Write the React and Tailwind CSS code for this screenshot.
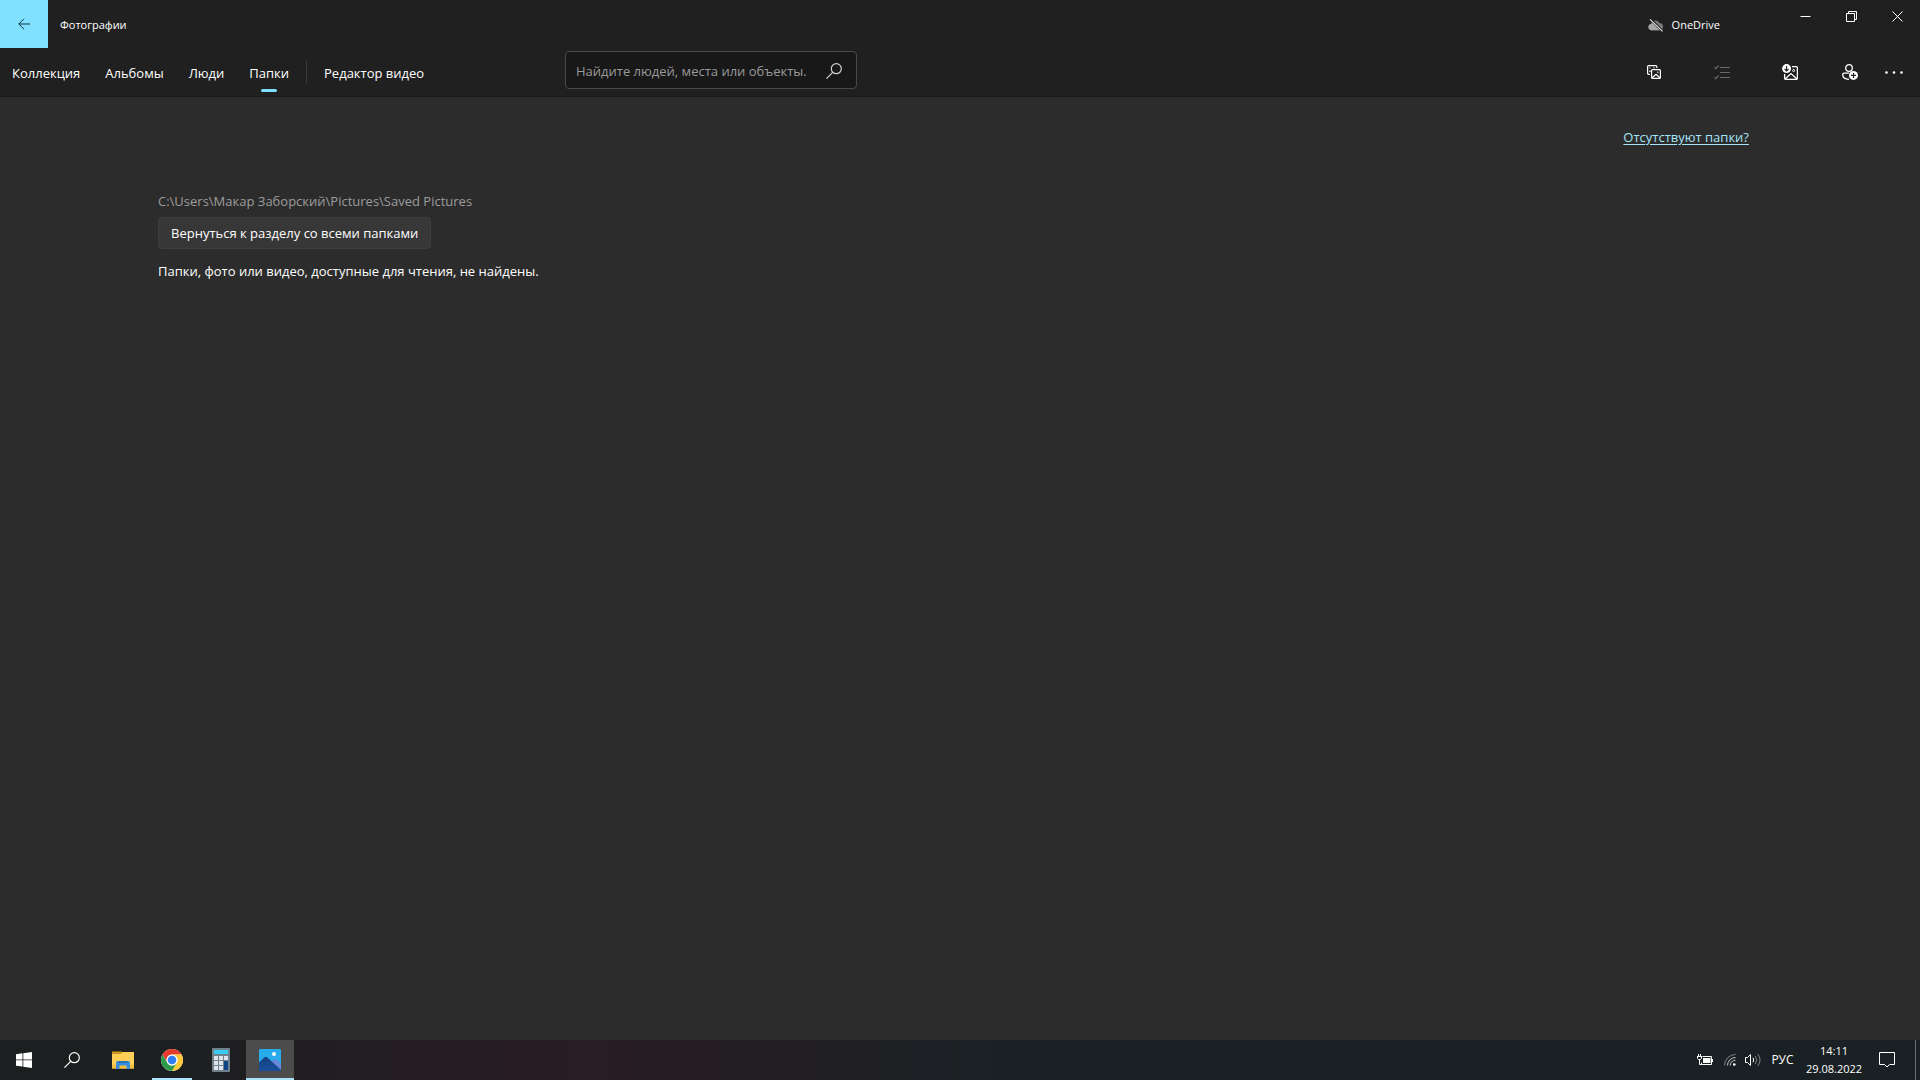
import { useState } from 'react';
import { clsx } from 'clsx';

const TABS = ['Коллекция', 'Альбомы', 'Люди', 'Папки'];

function BackIcon() {
  return (
    <svg className="w-3 h-3" viewBox="0 0 12 12" fill="none" stroke="currentColor">
      <path d="M12 6H0.8M6 0.8 0.8 6 6 11.2" />
    </svg>
  );
}

function CloudOffIcon() {
  return (
    <svg className="w-4 h-4" viewBox="0 0 16 16">
      <path d="M3.4 13.2a3.2 3.2 0 0 1-.5-6.3A4.6 4.6 0 0 1 11.4 6a3.7 3.7 0 0 1 1.1 7.2z" fill="#7a7a7a" />
      <path d="M3.400 13.200a3.200 3.200 0 0 1-.5-6.300q2-.8 3.800.6l6 5.700z" fill="#a8a8a8" />
      <path d="M2.600 2.200 14.600 14.400" stroke="#202020" strokeWidth="2.600" />
      <path d="M2 2.400 14.600 14.400" stroke="#e6e6e6" strokeWidth="1.100" />
    </svg>
  );
}

function SearchIcon({ className }) {
  return (
    <svg className={className} viewBox="0 0 16 16" fill="none" stroke="currentColor" strokeWidth="1.2">
      <circle cx="10.300" cy="5.700" r="5" />
      <path d="M6.700 9.300 0.400 15.600" />
    </svg>
  );
}

function DuplicatesIcon() {
  return (
    <svg className="w-4 h-4" viewBox="0 0 16 16" fill="none" stroke="currentColor" strokeWidth="1.200">
      <path d="M4 10.400H2.600a1 1 0 0 1-1-1V2.600a1 1 0 0 1 1-1h7.200a1 1 0 0 1 1 1V4" />
      <path d="M3.400 4h1M3.400 7.800 4.600 6.600M7.500 3.800h1" />
      <rect x="5.600" y="5.600" width="8.800" height="8.800" rx="1" />
      <path d="m6.200 13.800 3.800-3.500 3.800 3.500" />
      <circle cx="11.800" cy="8.200" r="0.700" fill="currentColor" stroke="none" />
    </svg>
  );
}

function SelectIcon() {
  return (
    <svg className="w-4 h-4" viewBox="0 0 16 16" fill="none" stroke="currentColor">
      <path d="M6 3.500h10M6 8.500h10M6 13.500h10" />
      <path d="m0.500 3.300 1.300 1.300L4.700 1.500M0.500 13.300l1.300 1.300L4.700 11.500" strokeWidth="1.300" />
    </svg>
  );
}

function ImportIcon() {
  return (
    <svg className="w-4 h-4" viewBox="0 0 16 16" fill="none" stroke="currentColor" strokeWidth="1.300">
      <path d="M10 2.600h4.200a1.200 1.200 0 0 1 1.200 1.200v10.400a1.200 1.200 0 0 1-1.200 1.200H3.800a1.200 1.200 0 0 1-1.200-1.200V10" />
      <path d="m3 15 6-5.400 6 5.400" />
      <circle cx="11.600" cy="6.500" r="1" strokeWidth="1" />
      <circle cx="4.600" cy="4.600" r="4.500" fill="currentColor" stroke="none" />
      <path d="M4.600 2v5M2.600 5l2 2 2-2" stroke="#202020" strokeWidth="1.100" />
    </svg>
  );
}

function AddPersonIcon() {
  return (
    <svg className="w-4 h-4" viewBox="0 0 16 16" fill="none" stroke="currentColor" strokeWidth="1.300">
      <circle cx="7" cy="4" r="3.300" />
      <path d="M7 9.200H2a1.300 1.300 0 0 0-1.300 1.300c0 2.800 2.400 4.600 6.300 4.800" />
      <circle cx="11.500" cy="11.400" r="4.500" fill="currentColor" stroke="none" />
      <path d="M11.500 8.900v5M9 11.400h5" stroke="#202020" strokeWidth="1.200" />
    </svg>
  );
}

function MoreIcon() {
  return (
    <svg className="w-[18px] h-4" viewBox="0 0 18 16" fill="currentColor">
      <circle cx="1.500" cy="8.500" r="1.300" />
      <circle cx="9" cy="8.500" r="1.300" />
      <circle cx="16.500" cy="8.500" r="1.300" />
    </svg>
  );
}

function ToolButton({ label, disabled, className, children }) {
  return (
    <button
      aria-label={label}
      disabled={disabled}
      className={clsx('h-12 flex items-center justify-center disabled:text-[#6a6a6a]', className)}
    >
      {children}
    </button>
  );
}

function WindowButton({ label, children }) {
  return (
    <button aria-label={label} className="w-[46px] h-8 flex items-center justify-center hover:bg-white/10">
      <svg className="w-[11px] h-[11px]" viewBox="0 0 11 11" fill="none" stroke="currentColor">
        {children}
      </svg>
    </button>
  );
}

function TitleBar() {
  return (
    <header className="flex h-12 text-[11px] leading-4">
      <button aria-label="Назад" className="w-12 h-12 flex items-center justify-center bg-[#80e0ff] text-[#17343c]">
        <BackIcon />
      </button>
      <h1 className="self-center ml-3 pt-0.5">Фотографии</h1>
      <button className="self-center ml-auto mr-[62px] pt-0.5 flex items-center gap-2 text-xs leading-4">
        <CloudOffIcon />
        <span className="text-[11px]">OneDrive</span>
      </button>
      <div className="flex">
        <WindowButton label="Свернуть">
          <path d="M0.500 5.500h10" />
        </WindowButton>
        <WindowButton label="Свернуть в окно">
          <path d="M0.500 2.500h8v8h-8zM2.500 2.500v-2h8v8h-2" />
        </WindowButton>
        <WindowButton label="Закрыть">
          <path d="m0.500 0.500 10 10M10.500 0.500l-10 10" />
        </WindowButton>
      </div>
    </header>
  );
}

function NavBar() {
  const [active, setActive] = useState('Папки');

  return (
    <div className="flex h-[49px] border-b border-[#1a1a1a]">
      <nav className="flex gap-px w-[565px] shrink-0 text-[13px] leading-5">
        {TABS.map((tab) => (
          <button
            key={tab}
            onClick={() => setActive(tab)}
            className="relative h-12 px-3 pt-0.5"
          >
            {tab}
            {active === tab && (
              <span className="absolute bottom-1 left-1/2 -translate-x-1/2 w-4 h-[3px] rounded-full bg-[#80e0ff]" />
            )}
          </button>
        ))}
        <span className="w-px h-6 ml-1 mt-3 bg-[#3a3a3a]" />
        <button className="h-12 ml-1 px-3 pt-0.5">Редактор видео</button>
      </nav>

      {/* Search */}
      <form
        onSubmit={(e) => e.preventDefault()}
        className="flex items-center w-[292px] h-[38px] mt-[3px] rounded border border-[#4a4a4a] bg-[#181818]"
      >
        <input
          type="text"
          aria-label="Поиск"
          placeholder="Найдите людей, места или объекты."
          className="flex-1 min-w-0 h-full pl-2.5 pt-0.5 text-[13px] bg-transparent outline-none placeholder:text-[#9a9a9a]"
        />
        <button aria-label="Найти" className="w-11 h-full pt-0.5 flex items-center justify-center text-[#d0d0d0]">
          <SearchIcon className="w-4 h-4" />
        </button>
      </form>

      {/* Commands */}
      <div className="flex ml-auto pr-2">
        <ToolButton label="Показать дубликаты" className="w-[68px]">
          <DuplicatesIcon />
        </ToolButton>
        <ToolButton label="Выбрать" disabled className="w-[68px]">
          <SelectIcon />
        </ToolButton>
        <ToolButton label="Импорт" className="w-[68px]">
          <ImportIcon />
        </ToolButton>
        <ToolButton label="Добавить друзей" className="w-[52px]">
          <AddPersonIcon />
        </ToolButton>
        <ToolButton label="Ещё" className="w-9">
          <MoreIcon />
        </ToolButton>
      </div>
    </div>
  );
}

function StartIcon() {
  return (
    <svg className="w-4 h-4" viewBox="0 0 16 16" fill="#fff">
      <path d="M0 2.200 6.500 1.300v6.200H0zM7.300 1.200 16 0v7.500H7.300zM0 8.300h6.500v6.300L0 13.700zM7.300 8.300H16V16l-8.700-1.200z" />
    </svg>
  );
}

function ExplorerIcon() {
  return (
    <svg className="w-[22px] h-5" viewBox="0 0 22 20">
      <path d="M0 1.500h9.500l1 2H0z" fill="#dd9b12" />
      <path d="M0 3.500h9L10.500 2H22v16.500H0z" fill="#ffcf58" />
      <path d="M0 15h22v3.500H0z" fill="#f5bd3b" />
      <path d="M4 19v-6.500A1.500 1.500 0 0 1 5.500 11h11a1.500 1.500 0 0 1 1.500 1.500V19h-3.500v-3.500h-7V19z" fill="#3a8fdd" />
      <path d="M6.500 11h9v2h-9z" fill="#2173bd" />
    </svg>
  );
}

function ChromeIcon() {
  return (
    <svg className="w-6 h-6" viewBox="0 0 48 48">
      <circle cx="24" cy="24" r="22" fill="#fff" />
      <path d="M24 2a22 22 0 0 1 19.050 11H24a11 11 0 0 0-9.530 16.500L4.950 13A22 22 0 0 1 24 2z" fill="#e33b2e" />
      <path d="M43.050 13A22 22 0 0 1 24 46l9.530-16.500A11 11 0 0 0 24 13z" fill="#fcc934" />
      <path d="M4.950 13 14.470 29.500a11 11 0 0 0 19.060 0L24 46A22 22 0 0 1 4.950 13z" fill="#2c9a48" />
      <circle cx="24" cy="24" r="11" fill="#fff" />
      <circle cx="24" cy="24" r="8.700" fill="#2f7df0" />
    </svg>
  );
}

function CalculatorIcon() {
  return (
    <svg className="w-[18px] h-6" viewBox="0 0 18 24">
      <rect width="18" height="24" rx="1" fill="#71808d" />
      <rect x="2" y="2" width="14" height="4" fill="#39ccf2" />
      <path d="M2 8h4v4H2zM7 8h4v4H7zM12 8h4v4h-4zM2 13h4v4H2zM7 13h4v4H7zM2 18h4v4H2zM7 18h4v4H7z" fill="#dfe4ea" />
      <path d="M12 13h4v9h-4z" fill="#0c4684" />
    </svg>
  );
}

function PhotosIcon() {
  return (
    <svg className="w-[22px] h-[22px]" viewBox="0 0 22 22">
      <defs>
        <linearGradient id="photos-hill" x1="0" y1="0" x2="0" y2="1">
          <stop offset="0" stopColor="#15417f" />
          <stop offset="1" stopColor="#184f9d" />
        </linearGradient>
      </defs>
      <rect width="22" height="22" rx="1" fill="#27abea" />
      <path d="m11 14 4-3.500q1.200-.8 2.400 0L22 15v7H11z" fill="#6886dc" />
      <path d="M0 13.500 5.500 8.200q1.300-1 2.600 0L22 21v1H0z" fill="url(#photos-hill)" />
      <circle cx="15" cy="5" r="2" fill="#fff" />
    </svg>
  );
}

function BatteryIcon() {
  return (
    <svg className="w-4 h-3" viewBox="0 0 16 12" fill="none" stroke="currentColor">
      <path d="M5.500 2.500h9v8h-10v-2M15.500 5v3" />
      <path d="M6 4h7.500v5H6z" fill="currentColor" stroke="none" />
      <path d="M1.500 0v2M3.500 0v2M0 2.500h5M0.500 2.500v2l1 1h2l1-1v-2M2.500 5.500v5h2" />
    </svg>
  );
}

function WifiIcon() {
  return (
    <svg className="w-3 h-3" viewBox="0 0 12 12" fill="none" stroke="#c8c8c8">
      <path d="M0.500 11.500a11 11 0 0 1 11-11" stroke="#858585" />
      <path d="M3.500 11.500a8 8 0 0 1 8-8M6.200 11.500a5.300 5.300 0 0 1 5.300-5.300" />
      <circle cx="10.300" cy="10.500" r="1.300" fill="#fff" stroke="none" />
    </svg>
  );
}

function VolumeIcon() {
  return (
    <svg className="w-4 h-4" viewBox="0 0 16 16" fill="none" stroke="currentColor">
      <path d="M0.500 5.500h2l3-3v11l-3-3h-2z" />
      <path d="M8 5.800q1.400 2.200 0 4.400" />
      <path d="M10.300 4q3 4 0 8M12.800 2q4.500 6 0 12" stroke="#808080" />
    </svg>
  );
}

function NotificationsIcon() {
  return (
    <svg className="w-4 h-4" viewBox="0 0 16 16" fill="none" stroke="currentColor">
      <path d="M0.500 0.500h15v12H10.500L8 15l-2.500-2.500h-5z" />
    </svg>
  );
}

const APPS = [
  { name: 'Проводник', icon: ExplorerIcon },
  { name: 'Google Chrome', icon: ChromeIcon, running: true },
  { name: 'Калькулятор', icon: CalculatorIcon },
  { name: 'Фотографии', icon: PhotosIcon, running: true, focused: true },
];

function Taskbar() {
  return (
    <footer className="flex h-10 text-xs leading-4 bg-linear-to-r from-[#1b1f20] from-8% via-[#291c25] via-30% to-[#1a2124] to-52%">
      <button aria-label="Пуск" className="w-12 flex items-center justify-center">
        <StartIcon />
      </button>
      <button aria-label="Поиск" className="w-12 flex items-center justify-center">
        <SearchIcon className="w-4 h-4" />
      </button>
      <div className="flex gap-px ml-[3px]">
        {APPS.map(({ name, icon: Icon, running, focused }) => (
          <button
            key={name}
            aria-label={name}
            className={clsx('relative w-12 flex items-center justify-center', focused && 'bg-[#4c4c4c]')}
          >
            <Icon />
            {running && (
              <span
                className={clsx('absolute bottom-0 h-0.5 bg-[#a9e4fb]', focused ? 'inset-x-0' : 'inset-x-1')}
              />
            )}
          </button>
        ))}
      </div>

      {/* Tray */}
      <div className="flex items-center ml-auto">
        <button aria-label="Батарея" className="mr-[11px]">
          <BatteryIcon />
        </button>
        <button aria-label="Сеть" className="mr-[9px]">
          <WifiIcon />
        </button>
        <button aria-label="Громкость">
          <VolumeIcon />
        </button>
        <button className="w-[43px] text-center">РУС</button>
        <button className="w-[60px] text-[11px] leading-[18px] text-center">
          <time dateTime="2022-08-29T14:11">
            14:11
            <br />
            29.08.2022
          </time>
        </button>
        <button aria-label="Уведомления" className="w-[46px] h-10 flex items-center justify-center">
          <NotificationsIcon />
        </button>
        <span className="w-[5px] h-10 ml-[5px] border-l border-[#6b6f70]" />
      </div>
    </footer>
  );
}

export default function App() {
  return (
    <div className="min-h-screen flex flex-col bg-[#2c2c2c] text-white font-['Open_Sans','Noto_Sans',sans-serif]">
      <div className="bg-[#202020]">
        <TitleBar />
        <NavBar />
      </div>

      <main className="flex-1 flex flex-col items-start pl-[158px] pr-[171px] pt-[30px] text-[13px] leading-5">
        <a href="#missing" className="self-end text-[#a6e4f7] underline underline-offset-2">
          Отсутствуют папки?
        </a>
        <p className="mt-11 text-[#9c9c9c]">C:\Users\Макар Заборский\Pictures\Saved Pictures</p>
        <button className="h-8 mt-1.5 px-3 rounded border border-[#3f3f3f] bg-[#373737]">
          Вернуться к разделу со всеми папками
        </button>
        <p className="mt-3">Папки, фото или видео, доступные для чтения, не найдены.</p>
      </main>

      <Taskbar />
    </div>
  );
}
